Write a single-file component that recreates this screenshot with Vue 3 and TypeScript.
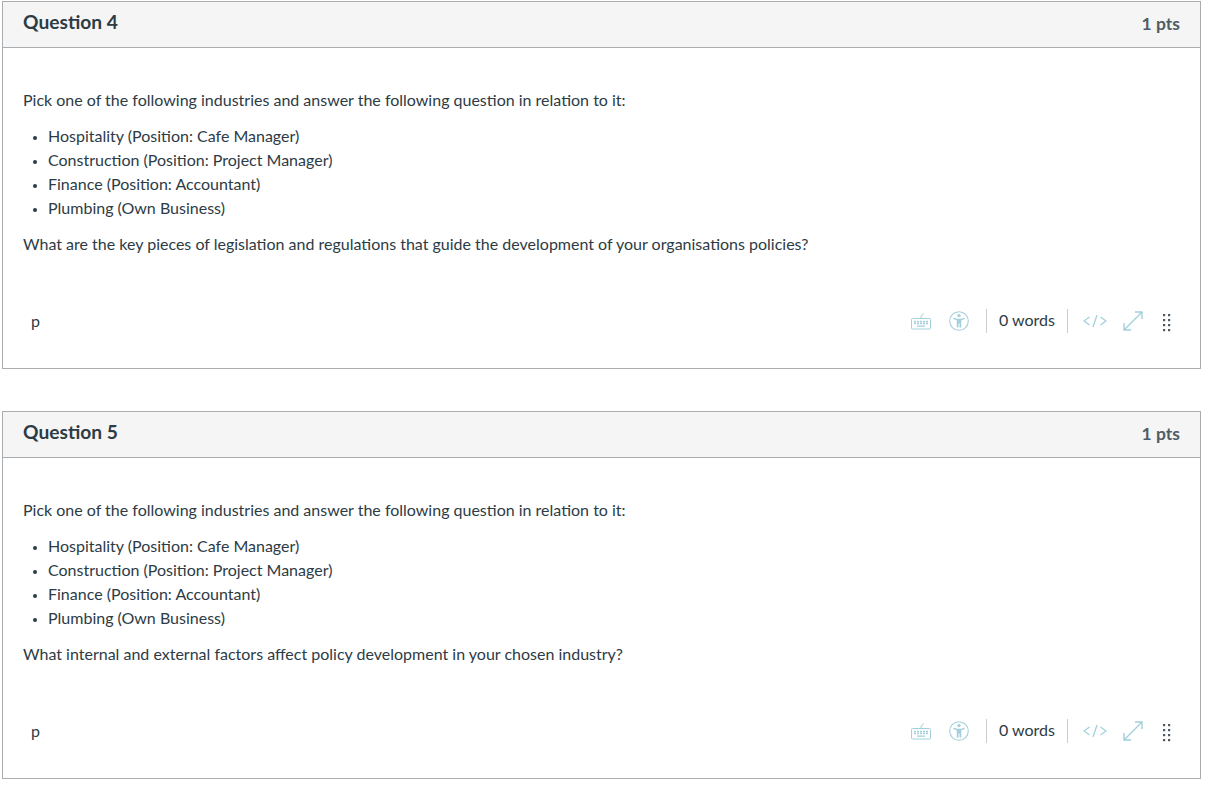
<script setup lang="ts">
interface Question {
  id: number;
  title: string;
  points: string;
  prompt: string;
}

const intro = 'Pick one of the following industries and answer the following question in relation to it:';

const industries = [
  'Hospitality (Position: Cafe Manager)',
  'Construction (Position: Project Manager)',
  'Finance (Position: Accountant)',
  'Plumbing (Own Business)'
];

const questions: Question[] = [
  {
    id: 4,
    title: 'Question 4',
    points: '1 pts',
    prompt: 'What are the key pieces of legislation and regulations that guide the development of your organisations policies?'
  },
  {
    id: 5,
    title: 'Question 5',
    points: '1 pts',
    prompt: 'What internal and external factors affect policy development in your chosen industry?'
  }
];
</script>

<template>
  <div class="page">
    <section v-for="q in questions" :key="q.id" class="question">
      <header class="question-header">
        <h2>{{ q.title }}</h2>
        <span class="points">{{ q.points }}</span>
      </header>
      <div class="question-body">
        <p class="intro">{{ intro }}</p>
        <ul>
          <li v-for="item in industries" :key="item">{{ item }}</li>
        </ul>
        <p class="prompt">{{ q.prompt }}</p>
      </div>
      <div class="editor-status">
        <span class="tag">p</span>
        <div class="tools">
          <svg class="icon" width="20" height="18" viewBox="0 0 20 18" fill="none" stroke="#a3d0dc">
            <path d="M10 6V4L13 1.500" />
            <rect x="0.500" y="6.500" width="19" height="10.500" rx="1" />
            <path d="M3 9.500h2M6 9.500h2M9 9.500h2M12 9.500h2M15 9.500h2M3 11.500h2M6 11.500h2M9 11.500h2M12 11.500h2M15 11.500h2M6 14.200h8" stroke-width="1.300" />
          </svg>
          <svg class="icon a11y" width="20" height="20" viewBox="0 0 20 20" fill="none">
            <circle cx="10" cy="10" r="9.300" stroke="#a3d0dc" stroke-width="1.100" />
            <circle cx="10" cy="4.600" r="1.700" fill="#a3d0dc" />
            <path d="M4.500 6.800L8 7.800H12L15.500 6.800L15.800 8L12.300 9.300V16.500H10.500V12.500H9.500V16.500H7.700V9.300L4.200 8Z" fill="#a3d0dc" />
          </svg>
          <span class="divider first"></span>
          <span class="count">0 words</span>
          <span class="divider second"></span>
          <svg class="icon code" width="24" height="14" viewBox="0 0 24 14" fill="none" stroke="#a3d0dc" stroke-width="1.300">
            <path d="M6.500 3L1 7L6.500 11M14 1L10 13M17.500 3L23 7L17.500 11" />
          </svg>
          <svg class="icon expand" width="20" height="20" viewBox="0 0 20 20" fill="none" stroke="#a3d0dc" stroke-width="1.400">
            <path d="M1 19L19 1M12 1H19V8M1 12V19H8" />
          </svg>
          <svg class="icon grip" width="10" height="24" viewBox="0 0 10 24" fill="#4d5a63">
            <rect x="1" y="5" width="2.200" height="2.200" /><rect x="6" y="5" width="2.200" height="2.200" />
            <rect x="1" y="10" width="2.200" height="2.200" /><rect x="6" y="10" width="2.200" height="2.200" />
            <rect x="1" y="15" width="2.200" height="2.200" /><rect x="6" y="15" width="2.200" height="2.200" />
            <rect x="1" y="20" width="2.200" height="2.200" /><rect x="6" y="20" width="2.200" height="2.200" />
          </svg>
        </div>
      </div>
    </section>
  </div>
</template>

<style scoped>
.page {
  padding: 1px 4px 0 2px;
  font-family: Lato, "Open Sans", sans-serif;
  font-size: 16px;
  color: #2d3b45;
}

.question {
  height: 368px;
  box-sizing: border-box;
  margin-bottom: 42px;
  border: 1px solid #aaadaf;
  display: flex;
  flex-direction: column;
}

.question-header {
  height: 46px;
  flex: none;
  box-sizing: border-box;
  background: #f5f5f5;
  border-bottom: 1px solid #aaadaf;
  padding: 0 20px;
  display: flex;
  justify-content: space-between;
  align-items: center;
}

.question-header h2 {
  margin: 0 0 6px;
  font-size: 19.2px;
  font-weight: 700;
  line-height: 24px;
}

.points {
  font-size: 17.500px;
  font-weight: 700;
  color: #4f5c65;
  line-height: 24px;
  margin-bottom: 2px;
}

.question-body {
  padding: 40px 20px 0;
  line-height: 24px;
}

.question-body p {
  margin: 0;
}

ul {
  margin: 12px 0;
  padding: 0 0 0 25px;
}

li::marker {
  font-size: 12px;
}

.editor-status {
  margin-top: 49px;
  padding: 0 22px 0 28px;
  height: 30px;
  display: flex;
  justify-content: space-between;
  align-items: center;
}

.tag {
  font-size: 16px;
}

.tools {
  display: flex;
  align-items: center;
  margin: 2px 6px 0 0;
}

.icon {
  flex: none;
}

.a11y {
  margin-left: 18px;
}

.divider {
  width: 1px;
  height: 24px;
  background: #c7cdd1;
}

.divider.first {
  margin-left: 17px;
}

.count {
  margin: 0 12px 2px;
  line-height: 24px;
}

.code {
  margin-left: 15px;
}

.expand {
  margin-left: 16px;
}

.grip {
  margin-left: 19px;
}
</style>

<style>
html, body {
  background: #fff;
}
</style>
